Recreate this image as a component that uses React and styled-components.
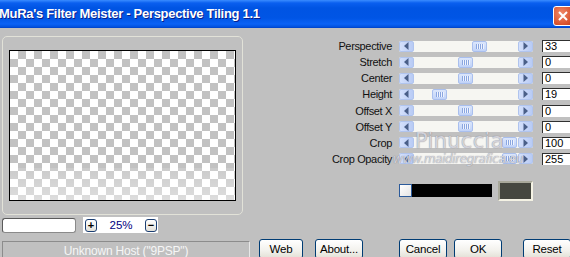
import React from 'react'
import styled, { createGlobalStyle } from 'styled-components'

const sliders = [
  { label: 'Perspective', value: '33', pos: 58 },
  { label: 'Stretch', value: '0', pos: 44 },
  { label: 'Center', value: '0', pos: 44 },
  { label: 'Height', value: '19', pos: 18 },
  { label: 'Offset X', value: '0', pos: 44 },
  { label: 'Offset Y', value: '0', pos: 44 },
  { label: 'Crop', value: '100', pos: 88 },
  { label: 'Crop Opacity', value: '255', pos: 88 },
]

const GlobalStyle = createGlobalStyle`
  html, body { margin:0; padding:0; overflow:hidden; }
  body { background:#c0c0c0; font-family:"Liberation Sans", Arial, sans-serif; }
`

const Window = styled.div`
  width:570px;
  height:257px;
  overflow:hidden;
  background:#c0c0c0;
  display:flex;
  flex-direction:column;
`

const TitleBar = styled.div`
  height:28px;
  flex:none;
  display:flex;
  justify-content:space-between;
  align-items:flex-start;
  background:linear-gradient(to bottom,#3a8cff 0px,#0a5fef 3px,#0054e3 8px,#0055e5 18px,#0a62f5 24px,#0050dd 27px,#003dc0 28px);
  color:#fff;
`

const Title = styled.span`
  font-size:13px;
  font-weight:bold;
  letter-spacing:-0.3px;
  margin:6px 0 0 -1px;
  text-shadow:1px 1px 0 #0a1f8a;
  white-space:nowrap;
`

const CloseBtn = styled.div`
  width:20px;
  height:20px;
  margin:6px -3px 0 0;
  box-sizing:border-box;
  border:1px solid #fff;
  border-radius:3px;
  background:radial-gradient(circle at 40% 35%,#f08a6a,#d9532e 70%,#c0401e);
  display:flex;
  align-items:center;
  justify-content:center;
`

const Body = styled.div`
  flex:1;
  display:grid;
  grid-template-columns:250px 1fr;
  min-height:0;
`

const LeftCol = styled.div`
  display:flex;
  flex-direction:column;
  padding:8px 0 0 2px;
`

const Group = styled.div`
  width:241px;
  height:179px;
  box-sizing:border-box;
  border:1px solid #e2e2d8;
  border-radius:5px;
  padding:13px 0 0 6px;
`

const Checker = styled.div`
  position:relative;
  width:227px;
  height:151px;
  box-sizing:border-box;
  border:1px solid #000;
  background:repeating-conic-gradient(#c2c2c2 0 25%, #fff 0 50%) 0 0/16px 16px;
  &::after{
    content:'';
    position:absolute;
    left:0; right:0; bottom:0;
    height:32px;
    background:linear-gradient(rgba(255,255,255,0.15),rgba(255,255,255,0.45));
  }
`

const ZoomRow = styled.div`
  display:flex;
  align-items:center;
  margin-top:2px;
  height:16px;
`

const ZoomInput = styled.div`
  width:74px;
  height:15px;
  box-sizing:border-box;
  background:#fff;
  border:1px solid #8a8a8a;
  border-top-color:#5a5a5a;
  border-left-color:#5a5a5a;
  border-radius:3px;
`

const ZoomStrip = styled.div`
  margin-left:7px;
  width:75px;
  height:16px;
  background:#fff;
  display:flex;
  align-items:center;
  padding-left:2px;
  box-sizing:border-box;
`

const SmallBtn = styled.div`
  width:12px;
  height:13px;
  box-sizing:border-box;
  border:1px solid #1c3f73;
  border-radius:3px;
  background:linear-gradient(#fff,#e4e2da);
  display:flex;
  align-items:center;
  justify-content:center;
  font-size:11px;
  line-height:1;
  color:#000;
  font-weight:bold;
`

const ZoomText = styled.span`
  width:48px;
  text-align:center;
  font-size:11.5px;
  color:#000080;
`

const StatusBar = styled.div`
  margin-top:8px;
  width:248px;
  height:18px;
  box-sizing:border-box;
  border-top:1px solid #8c8c8c;
  border-left:1px solid #8c8c8c;
  border-right:1px solid #e8e8e8;
  display:flex;
  align-items:center;
  justify-content:center;
  color:#f6f6f6;
  font-size:12px;
  letter-spacing:-0.2px;
`

const RightCol = styled.div`
  position:relative;
  display:flex;
  flex-direction:column;
  padding-top:12px;
`

const SliderGrid = styled.div`
  display:grid;
  grid-template-columns:149px 134px 1fr;
  grid-auto-rows:12px;
  row-gap:4.15px;
  align-items:center;
`

const Label = styled.span`
  text-align:right;
  padding-right:7px;
  font-size:11px;
  letter-spacing:-0.35px;
  color:#111;
  white-space:nowrap;
`

const Track = styled.div`
  position:relative;
  height:11px;
  display:flex;
  justify-content:space-between;
  background:#f6f6f2;
  border-radius:2px;
`

const ArrowBtn = styled.div`
  width:15px;
  height:11px;
  box-sizing:border-box;
  border:1px solid #b0c4ee;
  border-radius:2px;
  background:linear-gradient(to right,#d4e0fb,#b8cbf5);
  display:flex;
  align-items:center;
  justify-content:center;
`

const Thumb = styled.div`
  position:absolute;
  top:0;
  left:${p => 15 + p.$pos}px;
  width:15px;
  height:11px;
  box-sizing:border-box;
  border:1px solid #a9bfee;
  border-radius:2px;
  background:linear-gradient(#dbe6fc,#c1d3f8);
  display:flex;
  align-items:center;
  justify-content:center;
  gap:1px;
  & > i{
    width:1px;
    height:5px;
    background:#8aa6e0;
    box-shadow:1px 0 0 #eef3fe;
  }
`

const ValueBox = styled.div`
  margin-left:9px;
  width:34px;
  height:12px;
  box-sizing:border-box;
  background:#fff;
  border-top:1px solid #303030;
  border-left:1px solid #303030;
  font-size:11px;
  line-height:11px;
  padding-left:2px;
  color:#000;
`

const ColorRow = styled.div`
  display:flex;
  align-items:center;
  margin:16px 0 0 149px;
  height:20px;
`

const ColorBar = styled.div`
  width:93px;
  height:13px;
  background:#000;
  display:flex;
`

const ColorPick = styled.div`
  width:13px;
  height:13px;
  box-sizing:border-box;
  border:1px solid #2b5a9a;
  background:linear-gradient(135deg,#fff,#e4e4e4);
`

const Swatch = styled.div`
  margin-left:6px;
  width:35px;
  height:20px;
  box-sizing:border-box;
  background:#45473f;
  border:2px solid #f4f2e4;
  border-top-color:#a8a89a;
  border-left-color:#a8a89a;
`

const ButtonRow = styled.div`
  margin-top:auto;
  display:flex;
  height:20px;
`

const Button = styled.div`
  margin-left:${p => p.$ml}px;
  width:${p => p.$w}px;
  height:20px;
  flex:none;
  box-sizing:border-box;
  border:1px solid #003c74;
  border-radius:3px;
  background:linear-gradient(#ffffff,#f2f1ec 60%,#e3e0d6);
  display:flex;
  align-items:center;
  justify-content:center;
  font-size:11.5px;
  letter-spacing:-0.2px;
  color:#000;
`

const Watermark = styled.span`
  position:absolute;
  left:${p => p.$x}px;
  top:${p => p.$y}px;
  font-family:"DejaVu Sans", sans-serif;
  font-style:${p => p.$italic ? 'italic' : 'normal'};
  font-size:${p => p.$size}px;
  color:rgba(226,226,232,0.85);
  text-shadow:0 0 1px rgba(100,100,115,0.9);
  letter-spacing:${p => p.$ls}px;
  white-space:nowrap;
  pointer-events:none;
`

const Arrow = ({ dir }) => (
  <svg width="5" height="8" viewBox="0 0 5 8">
    <path d={dir === 'left' ? 'M4.5 0 L0 4 L4.5 8 Z' : 'M0.5 0 L5 4 L0.5 8 Z'} fill="#4a5f88" />
  </svg>
)

const Slider = ({ pos }) => (
  <Track>
    <ArrowBtn><Arrow dir="left" /></ArrowBtn>
    <Thumb $pos={pos}><i /><i /><i /><i /></Thumb>
    <ArrowBtn><Arrow dir="right" /></ArrowBtn>
  </Track>
)

export default function App() {
  return (
    <Window>
      <GlobalStyle />
      <TitleBar>
        <Title>MuRa's Filter Meister - Perspective Tiling 1.1</Title>
        <CloseBtn>
          <svg width="10" height="10" viewBox="0 0 10 10">
            <path d="M1 1 L9 9 M9 1 L1 9" stroke="#fff" strokeWidth="2" />
          </svg>
        </CloseBtn>
      </TitleBar>
      <Body>
        <LeftCol>
          <Group>
            <Checker />
          </Group>
          <ZoomRow>
            <ZoomInput />
            <ZoomStrip>
              <SmallBtn>+</SmallBtn>
              <ZoomText>25%</ZoomText>
              <SmallBtn>−</SmallBtn>
            </ZoomStrip>
          </ZoomRow>
          <StatusBar>Unknown Host ("9PSP")</StatusBar>
        </LeftCol>
        <RightCol>
          <SliderGrid>
            {sliders.map(s => (
              <React.Fragment key={s.label}>
                <Label>{s.label}</Label>
                <Slider pos={s.pos} />
                <ValueBox>{s.value}</ValueBox>
              </React.Fragment>
            ))}
          </SliderGrid>
          <ColorRow>
            <ColorBar><ColorPick /></ColorBar>
            <Swatch />
          </ColorRow>
          <ButtonRow>
            <Button $ml={9} $w={44}>Web</Button>
            <Button $ml={12} $w={48}>About...</Button>
            <Button $ml={36} $w={48}>Cancel</Button>
            <Button $ml={7} $w={48}>OK</Button>
            <Button $ml={21} $w={48}>Reset</Button>
          </ButtonRow>
          <Watermark $x={165} $y={101} $size={21} $ls={0.3}>Pinuccia</Watermark>
          <Watermark $x={143} $y={124} $size={12} $ls={-0.4} $italic>www.maidiregrafica.eu</Watermark>
        </RightCol>
      </Body>
    </Window>
  )
}
